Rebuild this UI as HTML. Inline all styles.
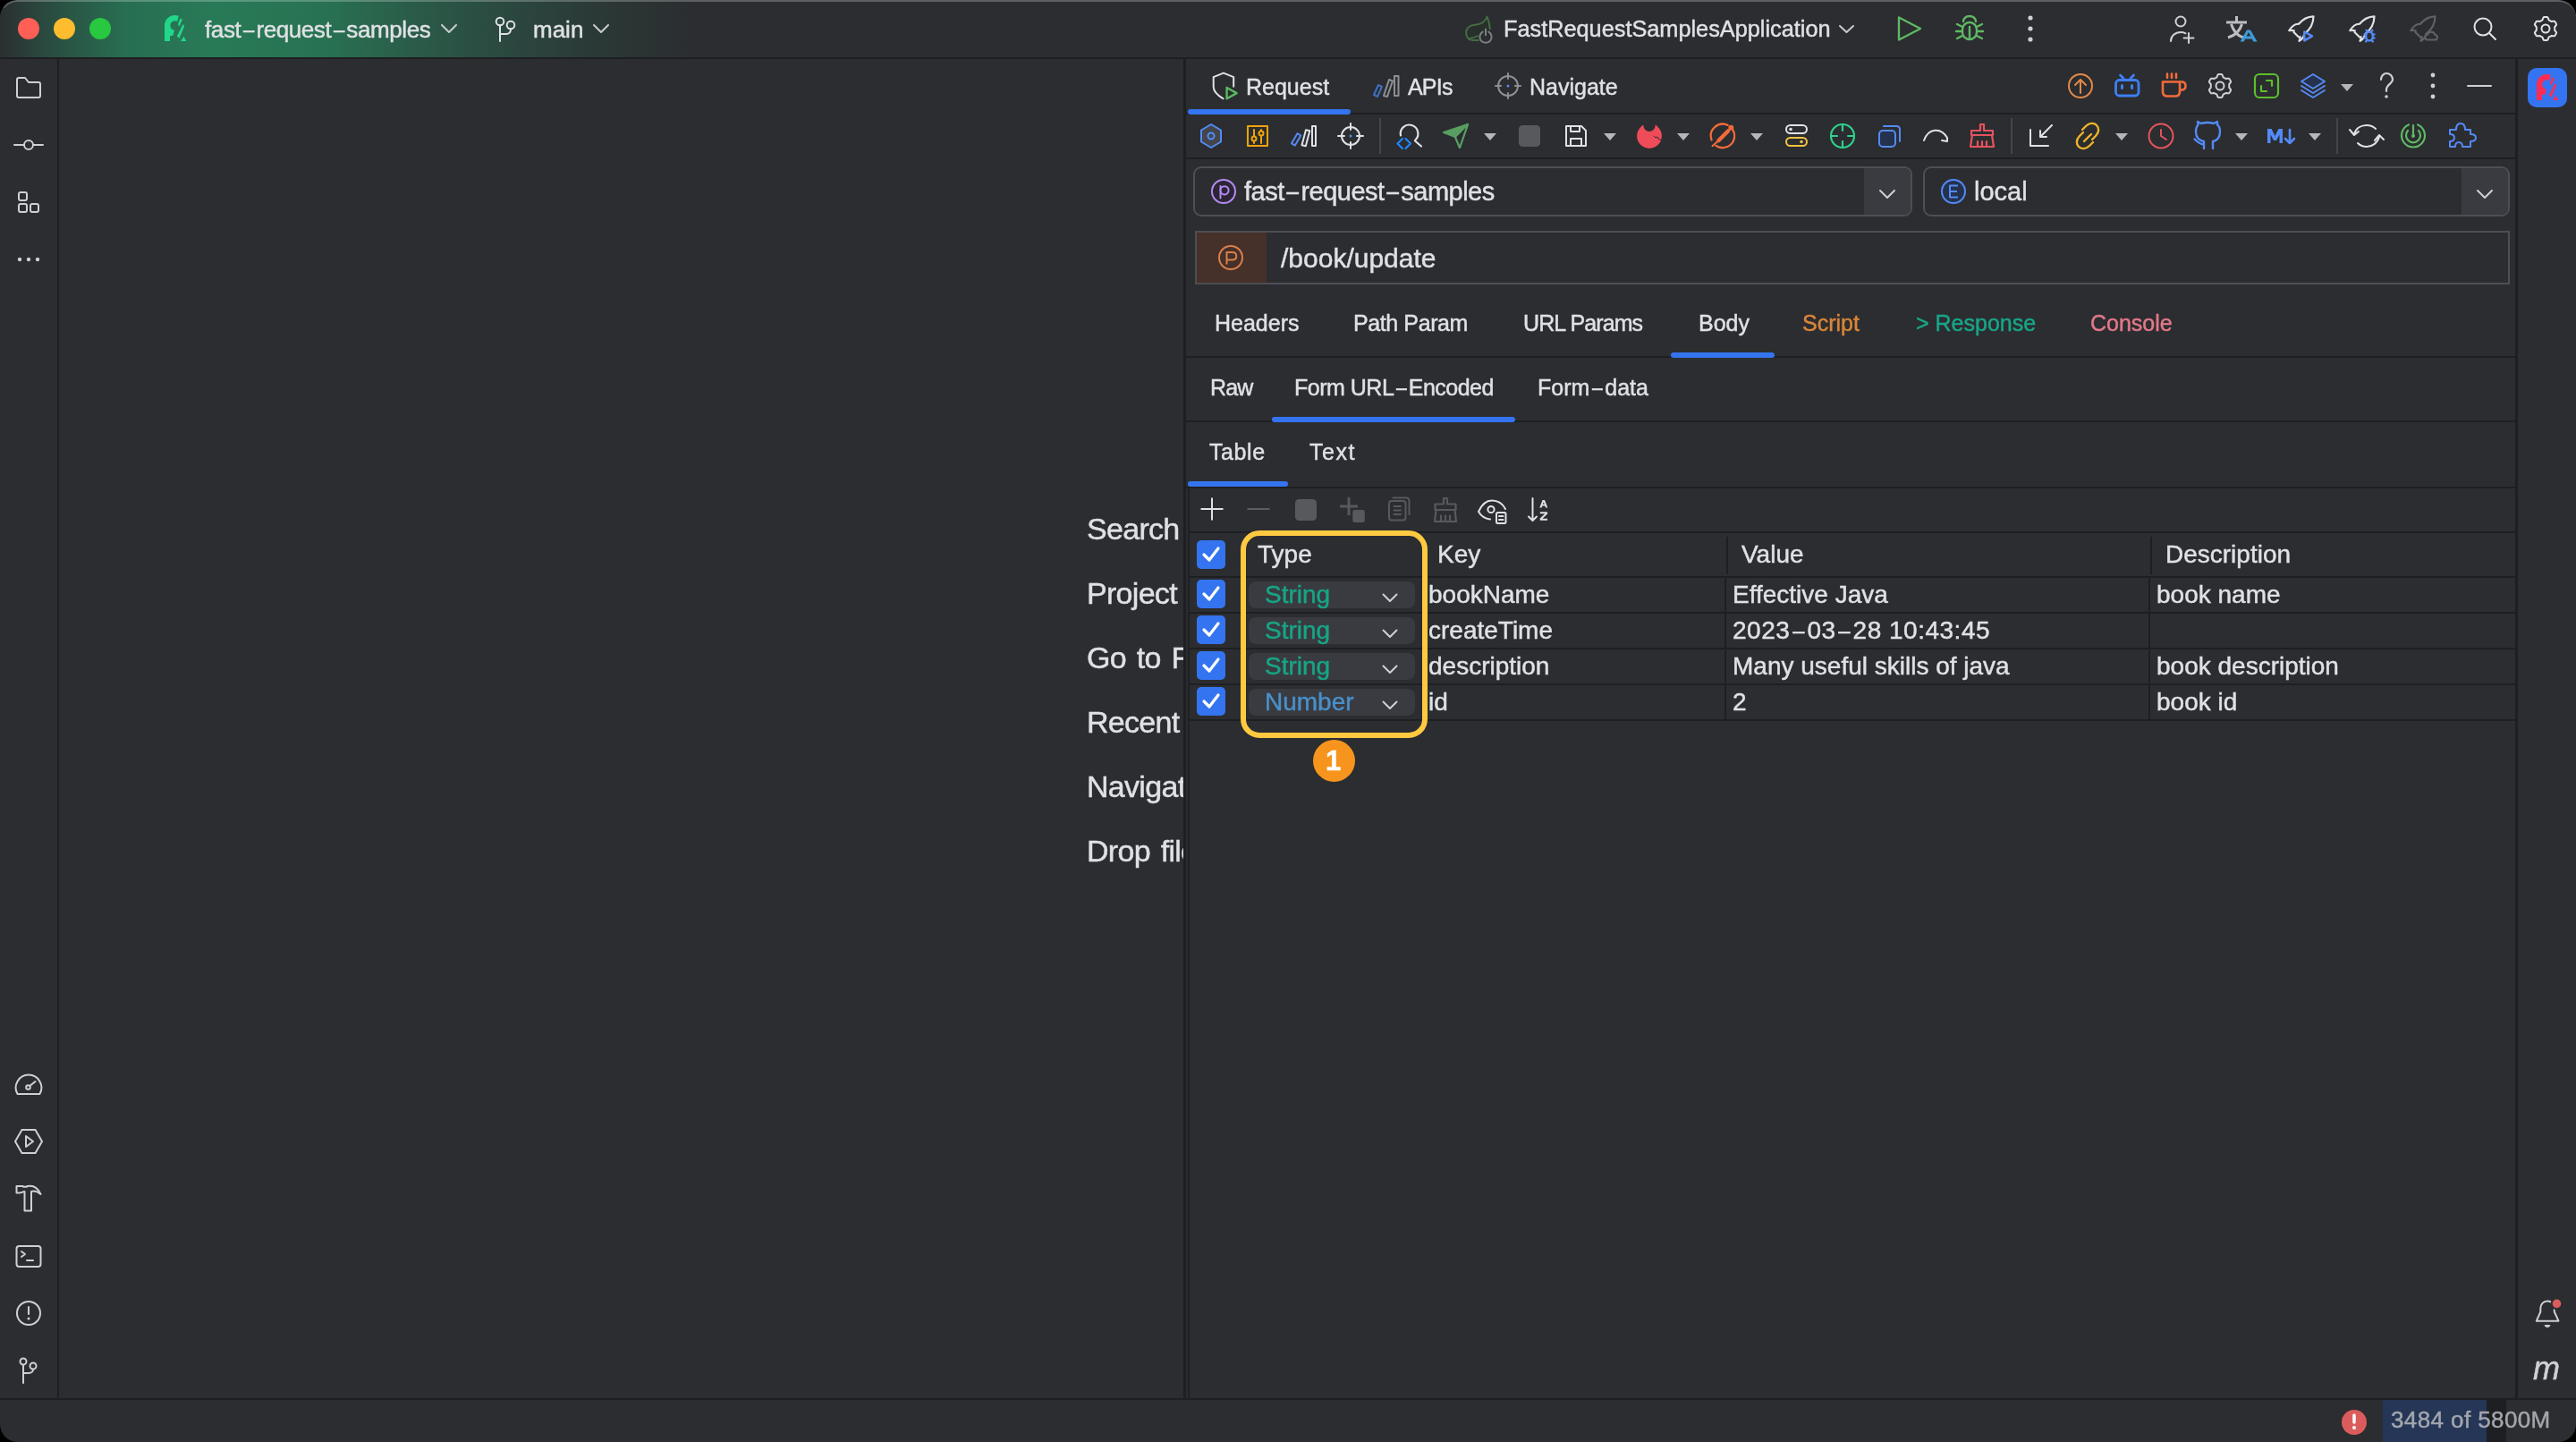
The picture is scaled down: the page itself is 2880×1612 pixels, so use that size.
<!DOCTYPE html>
<html><head><meta charset="utf-8">
<style>
*{box-sizing:border-box;margin:0;padding:0}
html,body{width:2880px;height:1612px;overflow:hidden;background:#000}
body{font-family:"Liberation Sans",sans-serif;color:#DFE1E5;position:relative}
.win{position:absolute;left:0;top:0;width:2880px;height:1612px;border-radius:20px;overflow:hidden;background:#2B2D30}
.winb{position:absolute;left:0;top:0;width:2880px;height:1612px;border-radius:20px;border-top:2px solid rgba(255,255,255,0.24);border-left:1px solid rgba(255,255,255,0.0);pointer-events:none}
.abs{position:absolute}
.t{position:absolute;white-space:nowrap;line-height:1;-webkit-text-stroke:0.45px currentColor;will-change:transform}
.hl{position:absolute;background:#1E1F22}
svg{position:absolute;overflow:visible;will-change:transform}
.ui{font-size:25px}
.d{margin:0 1.5px;display:inline-block;transform:scaleX(0.85)}
.big{font-size:29px}
.tb{font-size:28px}
.cb{position:absolute;left:1338px;width:32px;height:32px;border-radius:5px;background:#3574F0}
.combo{position:absolute;left:1396px;width:186px;height:30px;border-radius:8px;background:#393B40}
</style></head>
<body>
<div class="win">
  <!-- title bar -->
  <div class="abs" id="titlebar" style="left:0;top:0;width:2880px;height:64px;background:linear-gradient(90deg,#2B2E30 0px,#2A4A3F 50px,#286E52 140px,#287A56 240px,#287252 360px,#2A5A48 470px,#2B463E 580px,#2B3735 680px,#2B2D30 780px)"></div>
  
  <div class="hl" style="left:0;top:64px;width:2880px;height:2px"></div>
  <!-- traffic lights -->
  <div class="abs" style="left:20px;top:20px;width:24px;height:24px;border-radius:50%;background:#FF5F57"></div>
  <div class="abs" style="left:60px;top:20px;width:24px;height:24px;border-radius:50%;background:#FEBC2E"></div>
  <div class="abs" style="left:100px;top:20px;width:24px;height:24px;border-radius:50%;background:#28C840"></div>

  <div class="t" style="left:229px;top:20px;font-size:26px;letter-spacing:-0.4px">fast<span class="d">&#8211;</span>request<span class="d">&#8211;</span>samples</div>
  <div class="t" style="left:596px;top:20px;font-size:26px">main</div>
  <div class="t" style="left:1681px;top:20px;font-size:25.3px">FastRequestSamplesApplication</div>
  <!-- left strip border -->
  <div class="hl" style="left:64px;top:66px;width:2px;height:1497px"></div>
  <!-- status bar border -->
  <div class="hl" style="left:0;top:1563px;width:2880px;height:2px"></div>
  <!-- panel borders -->
  <div class="hl" style="left:1323px;top:66px;width:3px;height:1497px"></div>
  <div class="hl" style="left:2812px;top:66px;width:3px;height:1497px"></div>

  <!-- main area labels -->
  <div class="abs" style="left:66px;top:66px;width:1257px;height:1497px;overflow:hidden">
    <div class="t" style="left:1149px;top:508px;font-size:34px;letter-spacing:-0.7px;word-spacing:3px">Search Everywhere</div>
    <div class="t" style="left:1149px;top:580px;font-size:34px;letter-spacing:-0.7px;word-spacing:3px">Project View</div>
    <div class="t" style="left:1149px;top:652px;font-size:34px;letter-spacing:-0.7px;word-spacing:3px">Go to File</div>
    <div class="t" style="left:1149px;top:724px;font-size:34px;letter-spacing:-0.7px;word-spacing:3px">Recent Files</div>
    <div class="t" style="left:1149px;top:796px;font-size:34px;letter-spacing:-0.7px;word-spacing:3px">Navigation Bar</div>
    <div class="t" style="left:1149px;top:868px;font-size:34px;letter-spacing:-0.7px;word-spacing:3px">Drop files here to open them</div>
  </div>

  <!-- panel -->
  <!-- ============ PANEL ============ -->
  <!-- tab bar 1 -->
  <div class="hl" style="left:1326px;top:126px;width:1486px;height:2px"></div>
  <div class="abs" style="left:1328px;top:122px;width:182px;height:6px;border-radius:3px;background:#3574F0"></div>
  <div class="t ui" style="left:1393px;top:85px">Request</div>
  <div class="t ui" style="left:1574px;top:85px;letter-spacing:-0.8px">APIs</div>
  <div class="t ui" style="left:1710px;top:85px">Navigate</div>

  <!-- toolbar -->
  <div class="hl" style="left:1326px;top:176px;width:1486px;height:2px"></div>
  <div class="abs" style="left:1542px;top:132px;width:2px;height:40px;background:#43454A"></div>
  <div class="abs" style="left:2248px;top:132px;width:2px;height:40px;background:#43454A"></div>
  <div class="abs" style="left:2612px;top:132px;width:2px;height:40px;background:#43454A"></div>

  <!-- project combo -->
  <div class="abs" style="left:1334px;top:186px;width:804px;height:56px;border:2px solid #4C4F55;border-radius:9px;overflow:hidden">
    <div class="abs" style="left:748px;top:0;width:54px;height:52px;background:#393B40"></div>
  </div>
  <div class="abs" style="left:1354px;top:200px;width:28px;height:28px;border-radius:50%;border:2px solid #B48BF0;background:#2C2536"></div>
  
  <div class="t big" style="left:1391px;top:200px;letter-spacing:-0.5px">fast<span class="d">&#8211;</span>request<span class="d">&#8211;</span>samples</div>
  <!-- env combo -->
  <div class="abs" style="left:2150px;top:186px;width:656px;height:56px;border:2px solid #4C4F55;border-radius:9px;overflow:hidden">
    <div class="abs" style="left:600px;top:0;width:54px;height:52px;background:#393B40"></div>
  </div>
  <div class="abs" style="left:2170px;top:200px;width:28px;height:28px;border-radius:50%;border:2px solid #548AF7;background:#25324D"></div>
  
  <div class="t big" style="left:2207px;top:200px">local</div>

  <!-- url field -->
  <div class="abs" style="left:1336px;top:258px;width:1470px;height:60px;border:2px solid #4C4F55"></div>
  <div class="abs" style="left:1338px;top:260px;width:78px;height:56px;background:#45302A"></div>
  <div class="abs" style="left:1362px;top:274px;width:28px;height:28px;border-radius:50%;border:2px solid #D9804A"></div>
  
  <div class="t big" style="left:1432px;top:274px;font-size:30px">/book/update</div>

  <!-- headers tabs -->
  <div class="hl" style="left:1326px;top:398px;width:1486px;height:2px"></div>
  <div class="abs" style="left:1868px;top:394px;width:116px;height:6px;border-radius:3px;background:#3574F0"></div>
  <div class="t ui" style="left:1358px;top:349px">Headers</div>
  <div class="t ui" style="left:1513px;top:349px;letter-spacing:-0.4px">Path Param</div>
  <div class="t ui" style="left:1703px;top:349px;letter-spacing:-0.9px">URL Params</div>
  <div class="t ui" style="left:1899px;top:349px">Body</div>
  <div class="t ui" style="left:2015px;top:349px;color:#DA8538">Script</div>
  <div class="t ui" style="left:2142px;top:349px;color:#18A688">&gt; Response</div>
  <div class="t ui" style="left:2337px;top:349px;color:#E3788A">Console</div>

  <!-- body tabs -->
  <div class="hl" style="left:1326px;top:470px;width:1486px;height:2px"></div>
  <div class="abs" style="left:1422px;top:466px;width:272px;height:6px;border-radius:3px;background:#3574F0"></div>
  <div class="t ui" style="left:1353px;top:421px;letter-spacing:-0.8px">Raw</div>
  <div class="t ui" style="left:1447px;top:421px;letter-spacing:-0.5px">Form URL<span class="d">&#8211;</span>Encoded</div>
  <div class="t ui" style="left:1719px;top:421px">Form<span class="d">&#8211;</span>data</div>

  <!-- table/text tabs -->
  <div class="hl" style="left:1326px;top:544px;width:1486px;height:2px"></div>
  <div class="abs" style="left:1328px;top:538px;width:112px;height:6px;border-radius:3px;background:#3574F0"></div>
  <div class="t ui" style="left:1352px;top:493px;letter-spacing:0.6px">Table</div>
  <div class="t ui" style="left:1464px;top:493px;letter-spacing:1.5px">Text</div>

  <!-- table section -->
  <div class="hl" style="left:1328px;top:546px;width:2px;height:1017px"></div>
  <div class="hl" style="left:1330px;top:594px;width:1482px;height:2px"></div>
  <!-- rows borders -->
  <div class="hl" style="left:1330px;top:644px;width:1482px;height:2px"></div>
  <div class="hl" style="left:1330px;top:684px;width:1482px;height:2px"></div>
  <div class="hl" style="left:1330px;top:724px;width:1482px;height:2px"></div>
  <div class="hl" style="left:1330px;top:764px;width:1482px;height:2px"></div>
  <div class="hl" style="left:1330px;top:804px;width:1482px;height:2px"></div>
  <!-- column separators -->
  <div class="hl" style="left:1930px;top:600px;width:2px;height:42px"></div>
  <div class="hl" style="left:2404px;top:600px;width:2px;height:42px"></div>
  <div class="hl" style="left:1928px;top:646px;width:2px;height:158px"></div>
  <div class="hl" style="left:2402px;top:646px;width:2px;height:158px"></div>

  <!-- header -->
  <div class="t tb" style="left:1406px;top:606px">Type</div>
  <div class="t tb" style="left:1607px;top:606px">Key</div>
  <div class="t tb" style="left:1947px;top:606px">Value</div>
  <div class="t tb" style="left:2421px;top:606px">Description</div>

  <!-- checkboxes -->
  <div class="cb" style="top:604px"></div>
  <div class="cb" style="top:648px"></div>
  <div class="cb" style="top:688px"></div>
  <div class="cb" style="top:728px"></div>
  <div class="cb" style="top:768px"></div>

  <!-- type combos -->
  <div class="combo" style="top:650px"></div>
  <div class="combo" style="top:690px"></div>
  <div class="combo" style="top:730px"></div>
  <div class="combo" style="top:770px"></div>
  <div class="t tb" style="left:1414px;top:651px;color:#17A585">String</div>
  <div class="t tb" style="left:1414px;top:691px;color:#17A585">String</div>
  <div class="t tb" style="left:1414px;top:731px;color:#17A585">String</div>
  <div class="t tb" style="left:1414px;top:771px;color:#4A8FC9">Number</div>

  <!-- rows -->
  <div class="t tb" style="left:1597px;top:651px">bookName</div>
  <div class="t tb" style="left:1937px;top:651px">Effective Java</div>
  <div class="t tb" style="left:2411px;top:651px">book name</div>
  <div class="t tb" style="left:1597px;top:691px">createTime</div>
  <div class="t tb" style="left:1937px;top:691px;letter-spacing:0.5px">2023<span class="d">&#8211;</span>03<span class="d">&#8211;</span>28 10:43:45</div>
  <div class="t tb" style="left:1597px;top:731px">description</div>
  <div class="t tb" style="left:1937px;top:731px">Many useful skills of java</div>
  <div class="t tb" style="left:2411px;top:731px">book description</div>
  <div class="t tb" style="left:1597px;top:771px">id</div>
  <div class="t tb" style="left:1937px;top:771px">2</div>
  <div class="t tb" style="left:2411px;top:771px">book id</div>

  <!-- yellow highlight -->
  <div class="abs" style="left:1387px;top:593px;width:209px;height:232px;border:6px solid #FFC940;border-radius:21px"></div>
  <div class="abs" style="left:1468px;top:827px;width:47px;height:47px;border-radius:50%;background:#F7941E"></div>
  <div class="t" style="left:1482px;top:835px;font-size:31px;font-weight:bold;color:#fff">1</div>


  <!-- status bar memory -->
  <div class="abs" style="left:2664px;top:1565px;width:116px;height:47px;background:#253657"></div>
  <div class="abs" style="left:2780px;top:1565px;width:22px;height:47px;background:#1E1F22"></div>
  <div class="t" style="left:2673px;top:1574px;font-size:26px;letter-spacing:0.4px;color:#A3A6AD">3484 of 5800M</div>
  <!-- ============ ICONS SVG LAYER ============ -->
  <svg width="2880" height="1612" style="left:0;top:0" fill="none" stroke-linecap="round" stroke-linejoin="round">
    <!-- title bar: FR logo -->
    <symbol id="frlogo" viewBox="0 0 40 40" overflow="visible">
      <clipPath id="frc"><path d="M0,0 L25.6,0 L14.8,36 L0,36 Z"/></clipPath>
      <path clip-path="url(#frc)" fill-rule="evenodd" d="M8,34 L8,16.5 A11.5,11.5 0 1 1 19.5,28 L14,28 L14,34 Z M19.5,11.3 A5.2,5.2 0 1 0 19.5,21.7 A5.2,5.2 0 1 0 19.5,11.3 Z"/>
      <path d="M25.4,8.6 L27.9,9.9 L24.4,17.4 L22.9,15.3 Z"/>
      <path d="M28.6,15 L30.2,17.3 L24.6,30.8 L21.8,28.6 Z"/>
      <path d="M26,34 L32.4,34 L29.3,28.8 Z"/>
    </symbol>
    <use href="#frlogo" x="176" y="12" width="40" height="40" fill="#21D789"/>
    <!-- chevrons title -->
    <path d="M494,28 L502,36 L510,28" stroke="#C9CBD0" stroke-width="2"/>
    <path d="M664,28 L672,36 L680,28" stroke="#C9CBD0" stroke-width="2"/>
    <!-- branch icon -->
    <g stroke="#DFE1E5" stroke-width="2">
      <circle cx="559" cy="24" r="4.3"/>
      <circle cx="571" cy="28" r="4.3"/>
      <path d="M559,28.5 L559,46 M559,38 L566,38 C569,38 571,36 571,32.5"/>
    </g>
    <!-- spring run icon -->
    <g transform="translate(1630,12)">
      <path d="M23,33 C17,33 12.5,33 11,30.5 C8,26 8.5,20 13,17.5 C17,15 22,16.5 27,13.5 C30,12 31.5,9 32.5,6.5 C34.5,11 35.5,16 35.8,20.5 L30,27 L23,33 Z" fill="#27302A" stroke="none"/>
      <path d="M23,33 C17,33 12.5,33 11,30.5 C8,26 8.5,20 13,17.5 C17,15 22,16.5 27,13.5 C30,12 31.5,9 32.5,6.5 C34.5,11 35.5,16 35.8,20.5 M13,31 C16,30.5 19,29.5 21.8,28.3" stroke="#456B44" stroke-width="2"/>
      <path d="M27.6,23.6 A6.6,6.6 0 1 0 34.4,23.6" stroke="#7E8085" stroke-width="2"/>
      <path d="M31,20.5 L31,27.2" stroke="#7E8085" stroke-width="2"/>
    </g>
    <path d="M2057,29 L2064.5,36 L2072,29" stroke="#C9CBD0" stroke-width="2"/>
    <!-- play -->
    <path d="M2123,19.5 L2147,32 L2123,44.5 Z" stroke="#5FB865" stroke-width="2.4"/>
    <!-- bug -->
    <g stroke="#5FB865" stroke-width="2.4">
      <path d="M2195,24 A7,6 0 0 1 2209,24"/>
      <rect x="2194" y="25" width="16" height="19" rx="8"/>
      <path d="M2202,30 L2202,42 M2194,30 L2188,27 M2210,30 L2216,27 M2193,35 L2187,35 M2211,35 L2217,35 M2194,40 L2188,43 M2210,40 L2216,43"/>
    </g>
    <!-- kebab -->
    <g fill="#CED0D6" stroke="none"><circle cx="2270" cy="20" r="2.6"/><circle cx="2270" cy="32" r="2.6"/><circle cx="2270" cy="44" r="2.6"/></g>
    <!-- person add -->
    <g stroke="#CED0D6" stroke-width="2">
      <circle cx="2438" cy="24" r="5.5"/>
      <path d="M2427,46 C2427,40 2432,36 2438,36 C2440,36 2442,36.5 2443.5,37.3"/>
      <path d="M2447,37 L2447,48 M2441.5,42.5 L2452.5,42.5"/>
    </g>
    <!-- translate -->
    <g stroke="#BDBEC2" stroke-width="3" stroke-linecap="butt"><path d="M2489,25 L2512,25 M2500.5,18 L2500.5,25 M2494.5,27 C2497,35 2502,40 2508,42 M2506.5,27 C2504,35 2498,40 2491,42"/></g>
    <path d="M2504.5,46.5 L2512,33.5 L2516,33.5 L2523.5,46.5 L2519.3,46.5 L2517.8,43.5 L2510.2,43.5 L2508.7,46.5 Z M2511.6,40.5 L2516.4,40.5 L2514,36 Z" fill="#3D9BD8" fill-rule="evenodd"/>
    <!-- rockets -->
    <path transform="translate(2550,12)" d="M36.5,6.3 C29.5,6.5 23.5,10.5 20,14.8 C16.5,14.5 12.5,17 9.3,22.2 C11,21.8 13,21.8 14.8,22.4 C14.6,23 14.5,23.5 14.5,24 L20,29.5 C20.5,29.5 21,29.4 21.6,29.2 C21.8,31 21.3,32.5 20.5,33.8 C23.5,32 25.5,29.5 26.3,26.2 C31.5,22 36.5,15 36.5,6.3 Z" stroke="#DFE1E5" stroke-width="2.2"/>
    <path transform="translate(2618,12)" d="M36.5,6.3 C29.5,6.5 23.5,10.5 20,14.8 C16.5,14.5 12.5,17 9.3,22.2 C11,21.8 13,21.8 14.8,22.4 C14.6,23 14.5,23.5 14.5,24 L20,29.5 C20.5,29.5 21,29.4 21.6,29.2 C21.8,31 21.3,32.5 20.5,33.8 C23.5,32 25.5,29.5 26.3,26.2 C31.5,22 36.5,15 36.5,6.3 Z" stroke="#DFE1E5" stroke-width="2.2"/>
    <path transform="translate(2686,12)" d="M36.5,6.3 C29.5,6.5 23.5,10.5 20,14.8 C16.5,14.5 12.5,17 9.3,22.2 C11,21.8 13,21.8 14.8,22.4 C14.6,23 14.5,23.5 14.5,24 L20,29.5 C20.5,29.5 21,29.4 21.6,29.2 C21.8,31 21.3,32.5 20.5,33.8 C23.5,32 25.5,29.5 26.3,26.2 C31.5,22 36.5,15 36.5,6.3 Z" stroke="#5F6166" stroke-width="2.2"/>
    <path d="M2576.3,35.5 L2585,40.4 L2576.3,45.4 Z" stroke="#548AF7" stroke-width="2.4" fill="#2B2D30"/>
    <g stroke="#548AF7" stroke-width="2.3" fill="#2B2D30"><ellipse cx="2649" cy="40.5" rx="3.8" ry="5"/><path d="M2646.5,35 L2645.5,33.8 M2651.5,35 L2652.5,33.8 M2644.5,38.5 L2643.5,38.5 M2653.5,38.5 L2654.5,38.5 M2644.5,42.5 L2643.5,42.5 M2653.5,42.5 L2654.5,42.5 M2646,45.5 L2645,46.5 M2652,45.5 L2653,46.5"/></g>
    <path d="M2714.5,44.5 L2722,44.5 A2.8,2.8 0 0 0 2722.3,38.9 A4.2,4.2 0 0 0 2714.3,38.5 A3,3 0 0 0 2714.5,44.5 Z" stroke="#5F6166" stroke-width="2" fill="#2B2D30"/>
    <!-- search -->
    <g stroke="#DFE1E5" stroke-width="2"><circle cx="2776" cy="30" r="9.5"/><path d="M2783,37 L2790,44"/></g>
    <!-- gear title -->
    <g stroke="#DFE1E5" stroke-width="2"><path d="M2846.0,19.0 L2847.1,19.0 L2848.2,19.3 L2849.0,20.8 L2849.5,22.3 L2850.3,22.8 L2851.1,23.2 L2851.9,23.6 L2852.6,24.1 L2854.2,23.8 L2855.9,23.7 L2856.6,24.5 L2857.3,25.5 L2857.8,26.5 L2858.1,27.6 L2857.2,29.0 L2856.2,30.2 L2856.2,31.1 L2856.2,32.0 L2856.2,32.9 L2856.2,33.8 L2857.2,35.0 L2858.1,36.4 L2857.8,37.5 L2857.3,38.5 L2856.6,39.5 L2855.9,40.3 L2854.2,40.2 L2852.6,39.9 L2851.9,40.4 L2851.1,40.8 L2850.3,41.2 L2849.5,41.7 L2849.0,43.2 L2848.2,44.7 L2847.1,45.0 L2846.0,45.0 L2844.9,45.0 L2843.8,44.7 L2843.0,43.2 L2842.5,41.7 L2841.7,41.2 L2840.9,40.8 L2840.1,40.4 L2839.4,39.9 L2837.8,40.2 L2836.1,40.3 L2835.4,39.5 L2834.7,38.5 L2834.2,37.5 L2833.9,36.4 L2834.8,35.0 L2835.8,33.8 L2835.8,32.9 L2835.8,32.0 L2835.8,31.1 L2835.8,30.2 L2834.8,29.0 L2833.9,27.6 L2834.2,26.5 L2834.7,25.5 L2835.4,24.5 L2836.1,23.7 L2837.8,23.8 L2839.4,24.1 L2840.1,23.6 L2840.9,23.2 L2841.7,22.8 L2842.5,22.3 L2843.0,20.8 L2843.8,19.3 L2844.9,19.0 Z"/><circle cx="2846" cy="32" r="4.5"/></g>

    <!-- left sidebar icons -->
    <g stroke="#CED0D6" stroke-width="2">
      <path d="M19,89 Q19,87 21,87 L28,87 L32,92 L43,92 Q45,92 45,94 L45,107 Q45,109 43,109 L21,109 Q19,109 19,107 Z"/>
      <path d="M16,162 L27,162 M37,162 L48,162"/><circle cx="32" cy="162" r="5"/>
      <rect x="21" y="215" width="9" height="9" rx="2"/><rect x="21" y="228" width="9" height="9" rx="2"/><rect x="34" y="228" width="9" height="9" rx="2"/>
    </g>
    <g fill="#CED0D6"><circle cx="22" cy="290" r="2.2"/><circle cx="32" cy="290" r="2.2"/><circle cx="42" cy="290" r="2.2"/></g>
    <g stroke="#CED0D6" stroke-width="2">
      <path d="M19.6,1223 A14.3,14.3 0 1 1 44.4,1223 Z"/><circle cx="31.5" cy="1215.5" r="2.3"/><path d="M33.5,1213.8 L39.5,1209"/>
      <path d="M24.5,1263 L39.5,1263 L47,1276 L39.5,1289 L24.5,1289 L17,1276 Z"/><path d="M29,1270 L37,1276 L29,1282 Z"/>
      <path d="M18.5,1326 L25,1326 C27,1327 29,1327 31,1326 C37,1325 42,1327 45.5,1335 C42,1332 38,1331 35,1332 L35,1353.5 L27.5,1353.5 L27.5,1332 C25,1332 24,1333.5 22,1333.5 L18.5,1333.5 Z"/>
      <rect x="18.5" y="1393" width="27" height="23" rx="3"/><path d="M24,1399 L28,1402 L24,1405 M30,1409 L37,1409"/>
      <circle cx="32" cy="1468" r="13"/><path d="M32,1461 L32,1469"/>
      <circle cx="26" cy="1522" r="3.5"/><circle cx="37" cy="1527" r="3.5"/><path d="M26,1526 L26,1546 M26,1535 L32,1535 C35,1535 37,1533 37,1531"/>
    </g>
    <circle cx="32" cy="1474" r="1.5" fill="#CED0D6"/>

    <!-- right strip -->
    <rect x="2826" y="76" width="44" height="44" rx="10" fill="#3574F0"/>
    <use href="#frlogo" x="2828" y="78" width="40" height="40" fill="#FF2D55"/>
    <path d="M2855.8,1463.5 L2855.8,1466.5 L2860.5,1476.7 L2835.8,1476.7 L2840.3,1466.5 L2840.3,1463 C2840.3,1458 2843.5,1454.6 2848,1454.6 C2849.5,1454.6 2850.8,1454.9 2852,1455.5" stroke="#CED0D6" stroke-width="2"/>
    <path d="M2844.5,1481 L2851.5,1481 C2851,1483 2849.5,1484 2848,1484 C2846.5,1484 2845,1483 2844.5,1481 Z" fill="#CED0D6"/>
    <circle cx="2858.5" cy="1457.4" r="5.8" fill="#DB5C5C" stroke="#2B2D30" stroke-width="2"/>
    <text x="2832" y="1542" font-family="Liberation Sans" font-style="italic" font-size="36" fill="#CED0D6" stroke="#CED0D6" stroke-width="0.5">m</text>

    <!-- status error -->
    <circle cx="2632" cy="1590" r="14" fill="#DB5C5C"/>
    <path d="M2632,1582 L2632,1590" stroke="#fff" stroke-width="3.5"/>
    <circle cx="2632" cy="1596" r="2" fill="#fff"/>
  </svg>
  <svg width="2880" height="1612" style="left:0;top:0" fill="none" stroke-linecap="round" stroke-linejoin="round">
    <!-- tab bar 1 icons -->
    <path d="M1367.6,110.3 C1361,106.5 1356.7,103 1356.7,97 L1356.7,86.1 L1367.9,81.6 L1379.2,86.1 L1379.2,96.7" stroke="#DFE1E5" stroke-width="2"/>
    <path d="M1371.6,98 L1382.6,104.1 L1371.6,110.3 Z" stroke="#5CB863" stroke-width="2.4" fill="#253028"/>
    <g stroke-width="2">
      <path d="M1536,106 L1541,95 L1545,97 L1540,108 Z" stroke="#3F6EC0"/>
      <path d="M1547,107 L1553,89 L1557,90.5 L1551,108 Z" stroke="#8C8F94"/>
      <rect x="1559" y="85" width="4.5" height="22" stroke="#8C8F94"/>
    </g>
    <g stroke="#8C8F94" stroke-width="2"><circle cx="1686" cy="96" r="11"/><path d="M1686,82 L1686,88 M1686,104 L1686,110 M1672,96 L1678,96 M1694,96 L1700,96"/></g>
    <circle cx="1686" cy="96" r="1.5" fill="#548AF7"/>

    <!-- tab bar right icons -->
    <g stroke="#E5884A" stroke-width="2"><circle cx="2326" cy="96" r="13"/><path d="M2326,104 L2326,89 M2320,95 L2326,89 L2332,95"/></g>
    <g stroke="#3D7FF5" stroke-width="2.8"><rect x="2365.5" y="89.5" width="25.5" height="17.5" rx="4"/><path d="M2370.5,84 L2374,87.5 M2385.5,84 L2382,87.5"/><path d="M2372.5,95.5 L2372.5,98.5 M2383.5,95.5 L2383.5,98.5" stroke-width="3"/></g>
    <g stroke="#F26B3A" stroke-width="2.6"><path d="M2418,91.5 L2437,91.5 L2437,102.5 Q2437,107.5 2432,107.5 L2423,107.5 Q2418,107.5 2418,102.5 Z M2437,91.5 L2439,91.5 Q2443.5,91.5 2443.5,96 Q2443.5,100.5 2439,100.5 L2437,100.5 M2423,82.5 L2423,87 M2428,82.5 L2428,87 M2433,82.5 L2433,87"/></g>
    <g stroke="#CED0D6" stroke-width="2"><path d="M2482.0,83.0 L2483.1,83.0 L2484.2,83.3 L2485.0,84.8 L2485.5,86.3 L2486.3,86.8 L2487.1,87.2 L2487.9,87.6 L2488.6,88.1 L2490.2,87.8 L2491.9,87.7 L2492.6,88.5 L2493.3,89.5 L2493.8,90.5 L2494.1,91.6 L2493.2,93.0 L2492.2,94.2 L2492.2,95.1 L2492.2,96.0 L2492.2,96.9 L2492.2,97.8 L2493.2,99.0 L2494.1,100.4 L2493.8,101.5 L2493.3,102.5 L2492.6,103.5 L2491.9,104.3 L2490.2,104.2 L2488.6,103.9 L2487.9,104.4 L2487.1,104.8 L2486.3,105.2 L2485.5,105.7 L2485.0,107.2 L2484.2,108.7 L2483.1,109.0 L2482.0,109.0 L2480.9,109.0 L2479.8,108.7 L2479.0,107.2 L2478.5,105.7 L2477.7,105.2 L2476.9,104.8 L2476.1,104.4 L2475.4,103.9 L2473.8,104.2 L2472.1,104.3 L2471.4,103.5 L2470.7,102.5 L2470.2,101.5 L2469.9,100.4 L2470.8,99.0 L2471.8,97.8 L2471.8,96.9 L2471.8,96.0 L2471.8,95.1 L2471.8,94.2 L2470.8,93.0 L2469.9,91.6 L2470.2,90.5 L2470.7,89.5 L2471.4,88.5 L2472.1,87.7 L2473.8,87.8 L2475.4,88.1 L2476.1,87.6 L2476.9,87.2 L2477.7,86.8 L2478.5,86.3 L2479.0,84.8 L2479.8,83.3 L2480.9,83.0 Z"/><circle cx="2482" cy="96" r="4.5"/></g>
    <g stroke="#5FBE2E" stroke-width="2.2"><rect x="2521" y="83" width="26" height="26" rx="5"/><path d="M2534,90 L2540,90 L2540,96 M2528,96 L2528,102 L2534,102"/></g>
    <g stroke="#548AF7" stroke-width="2"><path d="M2586,83 L2599,91 L2586,99 L2573,91 Z" fill="#25324D"/><path d="M2573,96 L2586,104 L2599,96 M2573,101 L2586,109 L2599,101"/></g>
    <path d="M2617,94 L2631,94 L2624,102 Z" fill="#B4B6BB"/>
    <g stroke="#CED0D6" stroke-width="2.2"><path d="M2662,89 C2662,85 2665,82 2668,82 C2672,82 2675,85 2675,89 C2675,93 2668,95 2668,100 L2668,102"/></g>
    <circle cx="2668" cy="108" r="1.8" fill="#CED0D6"/>
    <g fill="#CED0D6"><circle cx="2720" cy="84" r="2.4"/><circle cx="2720" cy="96" r="2.4"/><circle cx="2720" cy="108" r="2.4"/></g>
    <path d="M2759,96 L2785,96" stroke="#CED0D6" stroke-width="2"/>

    <!-- toolbar -->
    <path d="M1354,139 L1365,145.5 L1365,158.5 L1354,165 L1343,158.5 L1343,145.5 Z" stroke="#548AF7" stroke-width="2" fill="#43454A"/>
    <circle cx="1354" cy="152" r="3.5" stroke="#548AF7" stroke-width="2"/>
    <g stroke="#F0A30A" stroke-width="2"><rect x="1395" y="141" width="22" height="22"/><path d="M1402,145 L1402,160 M1410,145 L1410,160"/><circle cx="1402" cy="155" r="2.5" fill="#2B2D30"/><circle cx="1410" cy="149" r="2.5" fill="#2B2D30"/></g>
    <g stroke-width="2">
      <path d="M1444,160.3 L1447.8,162.6 L1454.3,151.5 L1450.5,149.2 Z" stroke="#548AF7"/>
      <path d="M1455.5,162.2 L1459.8,163.3 L1464.3,146.3 L1460,145.2 Z" stroke="#DFE1E5"/>
      <rect x="1467" y="141" width="4" height="22" stroke="#DFE1E5"/>
    </g>
    <g stroke="#DFE1E5" stroke-width="2"><circle cx="1510" cy="152" r="10"/><path d="M1510,138 L1510,145 M1510,159 L1510,166 M1496,152 L1503,152 M1517,152 L1524,152"/></g>
    <circle cx="1510" cy="152" r="1.5" fill="#548AF7"/>
    <g stroke="#DFE1E5" stroke-width="2.2"><path d="M1566,151.5 A9.8,9.8 0 1 1 1582.3,156.5 M1582,157.5 L1589,163.5"/></g>
    <path d="M1568,155 L1562.5,160.5 L1568,166 M1571.5,155 L1577,160.5 L1571.5,166" stroke="#1E88FF" stroke-width="2.2"/>
    <path d="M1614,148 L1641,139 L1632,165 L1627,153 Z M1627,153 L1641,139" stroke="#579E62" stroke-width="2.2" fill="#579E62"/>
    <path d="M1627,153 L1632,165 L1641,139 Z" fill="#2B2D30" stroke="#579E62" stroke-width="2"/>
    <rect x="1698" y="140" width="24" height="24" rx="4.5" fill="#58595D"/>
    <g stroke="#DFE1E5" stroke-width="2"><path d="M1751,141 L1768,141 L1773,146 L1773,163 L1751,163 Z M1756,141 L1756,147 L1766,147 L1766,141 M1756,163 L1756,155 L1768,155 L1768,163"/></g>
    <circle cx="1844" cy="152" r="13.9" fill="#EF4B59"/><circle cx="1844" cy="140.3" r="6.6" fill="#2B2D30"/><path d="M1849,152 L1851,154 L1853,153 L1855,156 L1857,156" stroke="#2B2D30" stroke-width="1" fill="none"/>
    <g stroke="#F26B3A" stroke-width="2.3"><path d="M1931.6,139.9 A13.3,13.3 0 0 0 1913.5,156.5 M1918.4,162.9 A13.3,13.3 0 0 0 1937.5,145.35"/><path d="M1932,146.5 L1921.5,157" stroke-width="4.5"/><path d="M1921,157.5 L1914.5,163.2" stroke-width="2"/></g><circle cx="1935.3" cy="142.7" r="3" fill="#F26B3A"/>
    <g stroke="#DFE1E5" stroke-width="2"><rect x="1997" y="140" width="23" height="9" rx="4.5"/></g>
    <circle cx="2002" cy="144.5" r="1.8" fill="#DFE1E5"/>
    <g stroke="#F0C341" stroke-width="2"><rect x="1997" y="154" width="23" height="9" rx="4.5"/></g>
    <circle cx="2014" cy="158.5" r="1.8" fill="#F0C341"/>
    <g stroke="#2FD18C" stroke-width="2.2"><circle cx="2060" cy="152" r="13"/><path d="M2060,139 L2060,146 M2060,158 L2060,165 M2047,152 L2054,152 M2066,152 L2073,152"/></g>
    <g stroke="#548AF7" stroke-width="2"><path d="M2106,141 L2120,141 Q2124,141 2124,145 L2124,158"/><rect x="2101" y="146" width="18" height="18" rx="4" fill="#25324D"/></g>
    <path d="M2151,157 C2156,143 2170,142 2177,154 M2177,154 L2177,158 L2171,157" stroke="#DFE1E5" stroke-width="2"/>
    <g stroke="#E5545E" stroke-width="2.2"><path d="M2214,139 L2218,139 L2218,146 L2228,146 L2228,151 L2204,151 L2204,146 L2214,146 Z M2205,151 L2203,164 L2229,164 L2227,151 M2211,158 L2211,164 M2216,158 L2216,164 M2221,158 L2221,164"/></g>
    <g stroke="#DFE1E5" stroke-width="2"><path d="M2270,145 L2270,163 L2290,163 M2294,140 L2281,153 M2281,146 L2281,153 L2288,153"/></g>
    <g stroke="#F0B429" stroke-width="2.4"><path d="M2329,148 L2325,152 C2321,156 2321,161 2324,164 C2327,167 2332,167 2336,163 L2340,159 M2339,156 L2343,152 C2347,148 2347,143 2344,140 C2341,137 2336,137 2332,141 L2328,145 M2330,158 L2338,150"/></g>
    <g stroke="#E5545E" stroke-width="2"><circle cx="2416" cy="152" r="13.5"/><path d="M2416,145 L2416,152 L2422,156"/></g>
    <g stroke="#548AF7" stroke-width="2.4"><path d="M2464,166 L2464,158 C2458,157 2455,153 2455,147 C2455,144 2456,141 2457.5,139.5 L2457,136 L2461,138 C2463,137.5 2465,137 2468,137 C2471,137 2473,137.5 2475,138 L2479,136 L2479,139.5 C2481,141 2482,144 2482,147 C2482,153 2479,157 2474,158 L2474,166 M2464,161.5 C2460,161.5 2457,159 2453.5,155.5"/></g>
    <path d="M2535,160 L2535,144 L2539.5,144 L2543.5,152 L2547.5,144 L2552,144 L2552,160 L2548.5,160 L2548.5,150.5 L2545,157 L2542,157 L2538.5,150.5 L2538.5,160 Z" fill="#548AF7"/>
    <path d="M2560,145 L2560,160 M2555,155 L2560,160 L2565,155" stroke="#548AF7" stroke-width="2.6"/>
    <g fill="#B4B6BB"><path d="M1659,149 L1673,149 L1666,157 Z"/><path d="M1793,149 L1807,149 L1800,157 Z"/><path d="M1875,149 L1889,149 L1882,157 Z"/><path d="M1957,149 L1971,149 L1964,157 Z"/><path d="M2365,149 L2379,149 L2372,157 Z"/><path d="M2499,149 L2513,149 L2506,157 Z"/><path d="M2581,149 L2595,149 L2588,157 Z"/></g>
    <g stroke="#DFE1E5" stroke-width="2"><path d="M2632,150 C2634,143 2640,140 2646,140 C2651,140 2654,142 2656,144 M2660,153 C2658,160 2652,164 2646,164 C2641,164 2638,162 2636,160 M2627,145 L2632,151 L2637,147 M2655,157 L2660,151 L2665,156"/></g>
    <g stroke="#5FB865" stroke-width="2.2"><path d="M2703,139.5 A13,13 0 1 1 2693,139.5"/><path d="M2704,146 A8,8 0 1 1 2692,146"/><path d="M2698,140 L2698,152"/></g>
    <circle cx="2698" cy="152" r="2" fill="#5FB865"/>
    <path d="M2739,150 L2739,145 L2746,145 C2746,140 2748,138 2751,138 C2754,138 2756,140 2756,145 L2762,145 L2762,150 C2767,150 2768,152 2768,154 C2768,157 2766,158 2762,158 L2762,164 L2753,164 C2753,160 2751,159 2749,159 C2747,159 2745,160 2745,164 L2739,164 L2739,158 C2743,158 2744,156 2744,154 C2744,152 2743,150 2739,150 Z" stroke="#548AF7" stroke-width="2"/>

    <!-- table toolbar -->
    <path d="M1355,556.5 L1355,581.5 M1342.5,569 L1367.5,569" stroke="#DFE1E5" stroke-width="2" stroke-linecap="butt"/>
    <path d="M1394.5,569 L1419.5,569" stroke="#5A5D62" stroke-width="2" stroke-linecap="butt"/>
    <rect x="1448" y="558" width="24" height="24" rx="4.5" fill="#58595D"/>
    <path d="M1508,556 L1508,576 M1498,566 L1518,566" stroke="#58595D" stroke-width="3" stroke-linecap="butt"/>
    <rect x="1512.3" y="570" width="13.5" height="14" rx="2.5" fill="#58595D"/>
    <g stroke="#58595D" stroke-width="2"><rect x="1553" y="560" width="18.5" height="21.5" rx="3"/><path d="M1557.5,556.5 L1572,556.5 Q1575.5,556.5 1575.5,560 L1575.5,575 M1558.5,566 L1566,566 M1558.5,570.5 L1566,570.5 M1558.5,575 L1566,575"/></g>
    <g stroke="#58595D" stroke-width="2.2"><path d="M1614,557 L1618,557 L1618,563.5 L1627.5,563.5 L1627.5,570 L1604.5,570 L1604.5,563.5 L1614,563.5 Z M1605.5,570 L1604,583 L1628,583 L1626.5,570 M1611,576.5 L1611,583 M1616,576.5 L1616,583 M1621,576.5 L1621,583"/></g>
    <g stroke="#DFE1E5" stroke-width="2"><path d="M1653,572 C1657,563 1662,559.5 1668,559.5 C1675,559.5 1680,563 1683,569 M1653,572 C1656,577 1661,580 1666,580.5"/><circle cx="1667" cy="569.5" r="3.6"/><rect x="1673" y="573" width="10.5" height="12" rx="1.5" fill="#2B2D30"/><path d="M1676,577 L1680.5,577 M1676,581 L1680.5,581"/></g>
    <g stroke="#DFE1E5" stroke-width="2"><path d="M1713.5,557 L1713.5,582 M1709,577.5 L1713.5,582 L1718,577.5"/></g>
    <path d="M1721.3,567.6 L1724.6,559 L1727,559 L1730.3,567.6 L1728,567.6 L1727.3,565.6 L1724.3,565.6 L1723.6,567.6 Z M1724.9,563.8 L1726.7,563.8 L1725.8,561.2 Z" fill="#DFE1E5" fill-rule="evenodd"/>
    <path d="M1721.8,573.2 L1729.8,573.2 M1729.8,573.2 L1722,580.8 M1721.8,580.8 L1730,580.8" stroke="#DFE1E5" stroke-width="2" stroke-linecap="butt"/>

    <!-- checkmarks -->
    <g stroke="#FFFFFF" stroke-width="3.2">
      <path d="M1346,620 L1352,626 L1362,613"/>
      <path d="M1346,664 L1352,670 L1362,657"/>
      <path d="M1346,704 L1352,710 L1362,697"/>
      <path d="M1346,744 L1352,750 L1362,737"/>
      <path d="M1346,784 L1352,790 L1362,777"/>
    </g>
    <!-- combo chevrons -->
    <g stroke="#CED0D6" stroke-width="2"><path d="M1546.5,664.5 L1554,672.0 L1561.5,664.5"/><path d="M1546.5,704.5 L1554,712.0 L1561.5,704.5"/><path d="M1546.5,744.5 L1554,752.0 L1561.5,744.5"/><path d="M1546.5,784.5 L1554,792.0 L1561.5,784.5"/></g>
    <!-- combobox chevrons -->
    <path d="M2102,213 L2110,221 L2118,213" stroke="#CED0D6" stroke-width="2"/>
    <path d="M2770,213 L2778,221 L2786,213" stroke="#CED0D6" stroke-width="2"/>
  <g stroke="#B48BF0" stroke-width="2" fill="none"><path d="M1364.5,208 L1364.5,221.5"/><circle cx="1369" cy="212.8" r="4.6"/></g>
    <path d="M2189,207.5 L2180,207.5 L2180,220.5 L2189,220.5 M2180,214 L2188,214" stroke="#548AF7" stroke-width="2" fill="none" stroke-linecap="butt"/>
    <path d="M1371.5,295.5 L1371.5,282 L1377.5,282 C1380.5,282 1382.3,283.8 1382.3,286.3 C1382.3,288.8 1380.5,290.6 1377.5,290.6 L1371.5,290.6" stroke="#D9804A" stroke-width="2" fill="none" stroke-linecap="butt"/>
  </svg>
</div>
<div class="winb"></div>
</body></html>
